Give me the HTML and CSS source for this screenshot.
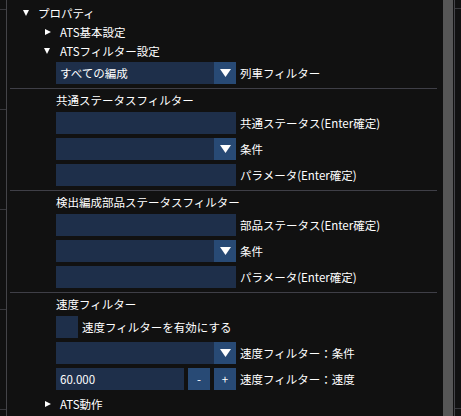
FILE: index.html
```html
<!DOCTYPE html>
<html lang="ja">
<head>
    <meta charset="UTF-8">
    <title>プロパティ</title>
    <link rel="stylesheet" href="styles.css">
</head>
<body>
    <div class="app">
        <div class="side side-left"></div>

        <div class="panel">
            <div class="node level1"><span class="arrow down"></span>プロパティ</div>
            <div class="node level2"><span class="arrow right"></span>ATS基本設定</div>
            <div class="node level2"><span class="arrow down"></span>ATSフィルター設定</div>

            <div class="row top-row">
                <div class="combo">
                    <span class="value">すべての編成</span>
                    <span class="combo-btn"><svg width="11" height="8" viewBox="0 0 11 8"><polygon points="0,0 11,0 5.5,8" fill="#fff"/></svg></span>
                </div>
                <span class="label">列車フィルター</span>
            </div>

            <div class="section">
                <div class="section-title">共通ステータスフィルター</div>
                <div class="rows">
                    <div class="row">
                        <div class="input"></div>
                        <span class="label">共通ステータス(Enter確定)</span>
                    </div>
                    <div class="row">
                        <div class="combo">
                            <span class="value"></span>
                            <span class="combo-btn"><svg width="11" height="8" viewBox="0 0 11 8"><polygon points="0,0 11,0 5.5,8" fill="#fff"/></svg></span>
                        </div>
                        <span class="label">条件</span>
                    </div>
                    <div class="row">
                        <div class="input"></div>
                        <span class="label">パラメータ(Enter確定)</span>
                    </div>
                </div>
            </div>

            <div class="section">
                <div class="section-title">検出編成部品ステータスフィルター</div>
                <div class="rows">
                    <div class="row">
                        <div class="input"></div>
                        <span class="label">部品ステータス(Enter確定)</span>
                    </div>
                    <div class="row">
                        <div class="combo">
                            <span class="value"></span>
                            <span class="combo-btn"><svg width="11" height="8" viewBox="0 0 11 8"><polygon points="0,0 11,0 5.5,8" fill="#fff"/></svg></span>
                        </div>
                        <span class="label">条件</span>
                    </div>
                    <div class="row">
                        <div class="input"></div>
                        <span class="label">パラメータ(Enter確定)</span>
                    </div>
                </div>
            </div>

            <div class="section">
                <div class="section-title">速度フィルター</div>
                <div class="rows">
                    <div class="row">
                        <div class="checkbox"></div>
                        <span class="label">速度フィルターを有効にする</span>
                    </div>
                    <div class="row">
                        <div class="combo">
                            <span class="value"></span>
                            <span class="combo-btn"><svg width="11" height="8" viewBox="0 0 11 8"><polygon points="0,0 11,0 5.5,8" fill="#fff"/></svg></span>
                        </div>
                        <span class="label">速度フィルター：条件</span>
                    </div>
                    <div class="row">
                        <div class="number">
                            <div class="input short">60.000</div>
                            <div class="step-btn">-</div>
                            <div class="step-btn">+</div>
                        </div>
                        <span class="label">速度フィルター：速度</span>
                    </div>
                </div>
            </div>

            <div class="node level2 last"><span class="arrow right"></span>ATS動作</div>
        </div>

        <div class="scrollbar"></div>
        <div class="side side-right"></div>
    </div>
</body>
</html>
```

FILE: styles.css
```css
* {
    margin: 0;
    padding: 0;
    box-sizing: border-box;
}

body {
    font-family: "Noto Sans CJK JP", "Noto Sans", sans-serif;
    font-size: 11.5px;
    color: #ffffff;
    background: #111111;
    width: 461px;
    height: 416px;
    overflow: hidden;
}

.app {
    display: flex;
    height: 416px;
}

.side {
    width: 6px;
    flex: none;
}

.side-left {
    width: 7px;
    border-right: 1px solid #444448;
    background: repeating-linear-gradient(to bottom, transparent 0 9px, #38383c 9px 10px, transparent 10px 100px);
}

.side-right {
    margin-left: 1px;
    width: 7px;
    border-left: 1px solid #444448;
    background: linear-gradient(to bottom, transparent 0 8px, #38383c 8px 9px, transparent 9px 408px, #38383c 408px 409px, transparent 409px);
}

.panel {
    flex: 1;
    padding-top: 3px;
    background: #111111;
}

.scrollbar {
    width: 10px;
    flex: none;
    background: #565656;
}

/* tree nodes */
.node {
    display: flex;
    align-items: center;
    height: 19px;
    white-space: nowrap;
}

.level1 {
    padding-left: 16px;
}

.level2 {
    padding-left: 37px;
}

.node.last {
    margin-top: 4px;
}

.arrow {
    width: 0;
    height: 0;
    margin-right: 9px;
}

.level2 .arrow {
    margin-right: 10px;
}

.arrow.down {
    border-left: 3px solid transparent;
    border-right: 3px solid transparent;
    border-top: 6px solid #ffffff;
}

.arrow.right {
    border-top: 3px solid transparent;
    border-bottom: 3px solid transparent;
    border-left: 6px solid #ffffff;
    margin-left: 1px;
    margin-right: 9px;
}

/* widgets */
.row {
    display: flex;
    align-items: center;
    gap: 4px;
    height: 22px;
}

.top-row {
    margin: 2px 0 0 49px;
}

.label {
    white-space: nowrap;
}

.combo,
.input,
.checkbox {
    background: #1e2f4a;
    height: 22px;
}

.combo {
    width: 180px;
    display: flex;
}

.combo .value,
.input {
    flex: 1;
    padding-left: 4px;
    line-height: 22px;
}

.input {
    width: 180px;
    flex: none;
}

.input.short {
    width: 128px;
}

.combo-btn,
.step-btn {
    width: 22px;
    height: 22px;
    background: #284a75;
    display: flex;
    align-items: center;
    justify-content: center;
}

.checkbox {
    width: 22px;
}

.number {
    display: flex;
    gap: 4px;
}

/* sections */
.section {
    margin: 4px 6px 0 3px;
    padding-left: 46px;
    border-top: 1px solid #3f3f47;
}

.section-title {
    height: 23px;
    line-height: 23px;
    white-space: nowrap;
}

.rows {
    display: flex;
    flex-direction: column;
    gap: 4px;
}
```
